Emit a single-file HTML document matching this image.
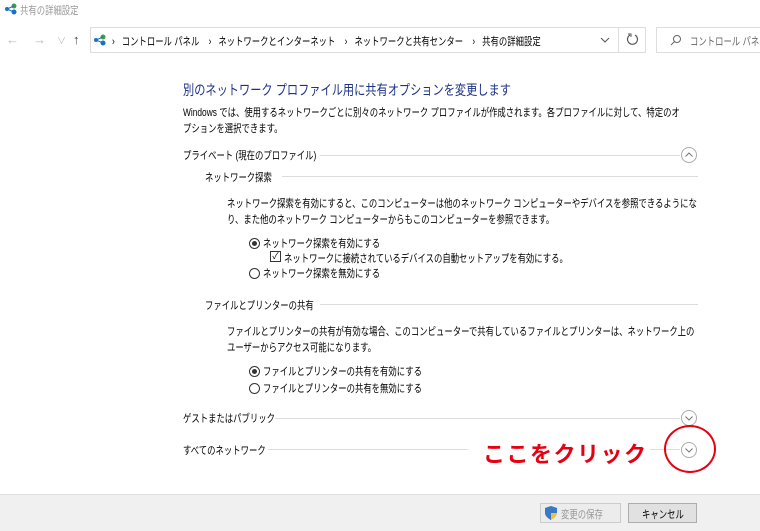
<!DOCTYPE html><html><head><meta charset="utf-8"><style>
body{margin:0;width:760px;height:530px;background:#fff;position:relative;overflow:hidden;font-family:"Liberation Sans","Noto Sans CJK JP",sans-serif;font-size:11px;color:#000}
.a{position:absolute;white-space:nowrap}
.t{transform:scaleX(0.76);transform-origin:0 0}
.line{position:absolute;height:1px;background:#dcdcdc}
.circ{position:absolute;width:16px;height:16px}
.rad{position:absolute;width:11px;height:11px;border:1px solid #333;border-radius:50%;box-sizing:border-box}
.dot::after{content:"";position:absolute;left:2px;top:2px;width:5px;height:5px;border-radius:50%;background:#333}
</style></head><body>
<svg class="a" style="left:4px;top:3px" width="14" height="12"><circle cx="3" cy="6" r="2" fill="#1c6fc7"/><circle cx="10" cy="3" r="2.5" fill="#3aa040"/><circle cx="10" cy="9" r="2.5" fill="#1c6fc7"/><path d="M3 6L10 3M3 6L10 9" stroke="#1c6fc7"/></svg>
<div class="a t" style="left:20px;top:2px;color:#999">共有の詳細設定</div>
<div class="a" style="left:6px;top:32px;color:#bbb;font-size:13px">←</div>
<div class="a" style="left:33px;top:32px;color:#bbb;font-size:13px">→</div>
<div class="a" style="left:57px;top:34px;color:#bbb;font-size:9px">∨</div>
<div class="a" style="left:73px;top:32px;color:#444;font-size:13px">↑</div>
<div class="a" style="left:90px;top:27px;width:556px;height:26px;border:1px solid #ddd;box-sizing:border-box"></div>
<div class="a" style="left:618px;top:27px;width:1px;height:26px;background:#ddd"></div>
<svg class="a" style="left:93px;top:34px" width="14" height="12"><circle cx="3" cy="6" r="2" fill="#1c6fc7"/><circle cx="10" cy="3" r="2.5" fill="#3aa040"/><circle cx="10" cy="9" r="2.5" fill="#1c6fc7"/><path d="M3 6L10 3M3 6L10 9" stroke="#1c6fc7"/></svg>
<div class="a t" style="left:112px;top:33px">›&nbsp;&nbsp; コントロール パネル&nbsp;&nbsp;&nbsp; ›&nbsp;&nbsp; ネットワークとインターネット&nbsp;&nbsp;&nbsp; ›&nbsp;&nbsp; ネットワークと共有センター&nbsp;&nbsp;&nbsp; ›&nbsp;&nbsp; 共有の詳細設定</div>
<svg class="a" style="left:600px;top:37px" width="10" height="6"><path d="M1 1L5 5L9 1" stroke="#555" fill="none"/></svg>
<svg class="a" style="left:626px;top:33px" width="13" height="13"><path d="M4 2A5 5 0 1 0 9 2" stroke="#555" fill="none" stroke-width="1.2"/><path d="M2 1H5V4" stroke="#555" fill="none"/></svg>
<div class="a" style="left:656px;top:27px;width:110px;height:26px;border:1px solid #ddd;box-sizing:border-box"></div>
<svg class="a" style="left:670px;top:34px" width="12" height="12"><circle cx="7" cy="5" r="3.5" stroke="#666" fill="none"/><path d="M4.5 7.5L1 11" stroke="#666"/></svg>
<div class="a t" style="left:690px;top:33px;color:#666">コントロール パネル</div>
<div class="a" style="left:183px;top:80px;font-size:14px;color:#1e3287;transform:scaleX(0.8);transform-origin:0 0">別のネットワーク プロファイル用に共有オプションを変更します</div>
<div class="a t" style="left:183px;top:105px;line-height:16px">Windows では、使用するネットワークごとに別々のネットワーク プロファイルが作成されます。各プロファイルに対して、特定のオ<br>プションを選択できます。</div>
<div class="a t" style="left:183px;top:147px">プライベート (現在のプロファイル)</div>
<div class="line" style="left:320px;top:155px;width:360px"></div>
<svg class="circ" style="left:681px;top:147px"><circle cx="8" cy="8" r="7.5" stroke="#aaa" fill="#fff"/><path d="M4.5 9.5L8 6L11.5 9.5" stroke="#777" fill="none"/></svg>
<div class="a t" style="left:205px;top:169px">ネットワーク探索</div>
<div class="line" style="left:282px;top:176px;width:416px"></div>
<div class="a t" style="left:227px;top:196px;line-height:16px">ネットワーク探索を有効にすると、このコンピューターは他のネットワーク コンピューターやデバイスを参照できるようにな<br>り、また他のネットワーク コンピューターからもこのコンピューターを参照できます。</div>
<div class="rad dot" style="left:249px;top:238px"></div><div class="a t" style="left:263px;top:235px">ネットワーク探索を有効にする</div>
<div class="a" style="left:270px;top:251px;width:11px;height:11px;border:1px solid #333;box-sizing:border-box;font-size:9px;line-height:9px;text-align:center">✓</div><div class="a t" style="left:284px;top:250px">ネットワークに接続されているデバイスの自動セットアップを有効にする。</div>
<div class="rad" style="left:249px;top:268px"></div><div class="a t" style="left:263px;top:265px">ネットワーク探索を無効にする</div>
<div class="a t" style="left:205px;top:297px">ファイルとプリンターの共有</div>
<div class="line" style="left:320px;top:304px;width:378px"></div>
<div class="a t" style="left:227px;top:324px;line-height:16px">ファイルとプリンターの共有が有効な場合、このコンピューターで共有しているファイルとプリンターは、ネットワーク上の<br>ユーザーからアクセス可能になります。</div>
<div class="rad dot" style="left:249px;top:366px"></div><div class="a t" style="left:263px;top:363px">ファイルとプリンターの共有を有効にする</div>
<div class="rad" style="left:249px;top:383px"></div><div class="a t" style="left:263px;top:380px">ファイルとプリンターの共有を無効にする</div>
<div class="a t" style="left:183px;top:410px">ゲストまたはパブリック</div>
<div class="line" style="left:275px;top:418px;width:405px"></div>
<svg class="circ" style="left:681px;top:410px"><circle cx="8" cy="8" r="7.5" stroke="#aaa" fill="#fff"/><path d="M4.5 6.5L8 10L11.5 6.5" stroke="#777" fill="none"/></svg>
<div class="a t" style="left:183px;top:442px">すべてのネットワーク</div>
<div class="line" style="left:268px;top:449px;width:200px"></div>
<div class="line" style="left:650px;top:449px;width:30px"></div>
<svg class="circ" style="left:681px;top:442px"><circle cx="8" cy="8" r="7.5" stroke="#aaa" fill="#fff"/><path d="M4.5 6.5L8 10L11.5 6.5" stroke="#777" fill="none"/></svg>
<div class="a" style="left:483px;top:437px;font-size:22px;font-weight:bold;color:#e60012;letter-spacing:1.5px">ここをクリック</div>
<div class="a" style="left:664px;top:425px;width:52px;height:48px;border:2.5px solid #e60012;border-radius:50%;box-sizing:border-box"></div>
<div class="a" style="left:0;top:494px;width:760px;height:36px;background:#f0f0f0;border-top:1px solid #dfdfdf"></div>
<div class="a" style="left:540px;top:503px;width:81px;height:20px;border:1px solid #ccc;background:#ececec;box-sizing:border-box"></div>
<div class="a t" style="left:561px;top:506px;color:#999">変更の保存</div>
<svg class="a" style="left:545px;top:506px" width="12" height="14"><path d="M6 0L12 2V7C12 11 6 14 6 14S0 11 0 7V2Z" fill="#f2c040"/><path d="M6 0V14S0 11 0 7V2Z M6 7H12V2L6 0" fill="#3a78c8"/></svg>
<div class="a" style="left:628px;top:503px;width:69px;height:20px;border:1px solid #adadad;background:#e1e1e1;box-sizing:border-box"></div>
<div class="a t" style="left:642px;top:506px">キャンセル</div>
</body></html>
